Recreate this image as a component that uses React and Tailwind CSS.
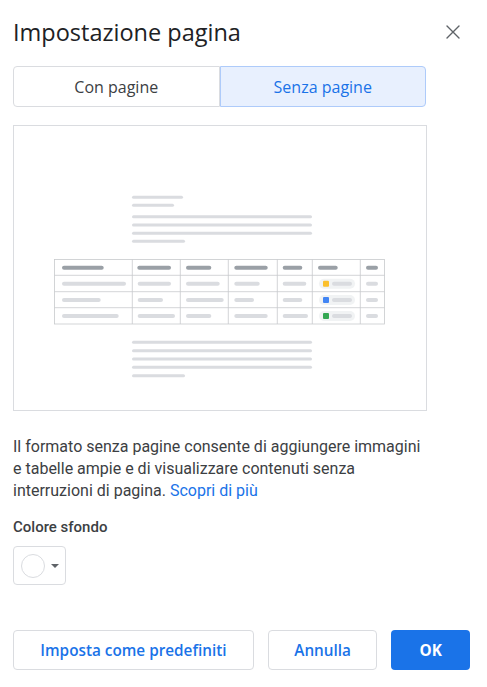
import React, { useState } from 'react';

const pill = (x1, x2, y, color, h = 4) => (
  <rect key={`${x1}-${y}`} x={x1} y={y - h / 2} width={x2 - x1} height={h} rx={h / 2} fill={color} />
);

const Illustration = () => {
  const light = '#dadce0';
  const dark = '#9aa0a6';
  const cols = [132.3, 180.3, 228.3, 277.3, 312.3, 360.3];
  const rows = [275.3, 291.7, 307.7];
  const bodyRows = [
    { y: 283.7, cells: [[62, 126], [137.7, 171], [186, 219.7], [234.3, 259.7], [282.7, 306.3]], chip: '#fbc02d' },
    { y: 300, cells: [[62, 100.7], [137.7, 163], [186, 223.7], [234.3, 254], [282.7, 302.3]], chip: '#4285f4' },
    { y: 316, cells: [[62, 118.7], [137.7, 175], [186, 211.3], [234.3, 267.7], [282.7, 308]], chip: '#34a853' },
  ];
  return (
    <svg viewBox="14 126 412 284" width="412" height="284" className="block">
      {/* top paragraph */}
      {pill(132, 183, 197.3, light, 3)}
      {pill(132, 174, 205.3, light, 3)}
      {pill(132, 312, 216.7, light, 3)}
      {pill(132, 312, 225, light, 3)}
      {pill(132, 312, 233.3, light, 3)}
      {pill(132, 185, 241.3, light, 3)}

      {/* table */}
      <rect x="54.5" y="259.5" width="330" height="64.5" fill="white" stroke="#c8cacd" strokeWidth="0.8" />
      {rows.map((y) => (
        <line key={y} x1="54.5" x2="384.5" y1={y} y2={y} stroke="#c8cacd" strokeWidth="0.8" />
      ))}
      {cols.map((x) => (
        <line key={x} x1={x} x2={x} y1="259.5" y2="324" stroke="#c8cacd" strokeWidth="0.8" />
      ))}
      {pill(62, 103.7, 267.7, dark)}
      {pill(137.3, 171, 267.7, dark)}
      {pill(186, 211.3, 267.7, dark)}
      {pill(234.3, 267.7, 267.7, dark)}
      {pill(282.7, 302.3, 267.7, dark)}
      {pill(318, 337.7, 267.7, dark)}
      {pill(366, 378, 267.7, dark)}
      {bodyRows.map((r) => (
        <g key={r.y}>
          {r.cells.map(([a, b]) => pill(a, b, r.y, light))}
          <rect x="319" y={r.y - 5} width="36" height="10" rx="5" fill="#f1f3f4" />
          <rect x="323" y={r.y - 3} width="6" height="6" rx="1" fill={r.chip} />
          {pill(332, 352, r.y, light)}
          {pill(366, 378, r.y, light)}
        </g>
      ))}

      {/* bottom paragraph */}
      {pill(132, 312, 342.3, light, 3)}
      {pill(132, 312, 350.7, light, 3)}
      {pill(132, 312, 359, light, 3)}
      {pill(132, 312, 367.3, light, 3)}
      {pill(132, 185, 375.7, light, 3)}
    </svg>
  );
};

export default function App() {
  const [mode, setMode] = useState('pageless');

  return (
    <div className="w-[487px] h-[687px] bg-white pl-[13px] pr-[17px] pt-[16px] font-['Roboto',sans-serif] text-[#3c4043]">
      {/* Header */}
      <div className="flex items-center justify-between">
        <h1 className="font-['Open_Sans',sans-serif] text-[23.5px] leading-[32px] text-[#202124]">
          Impostazione pagina
        </h1>
        <button className="mr-[10px] text-[#5f6368]">
          <svg width="14" height="14" viewBox="0 0 14 14" className="block">
            <path d="M1 1L13 13M13 1L1 13" stroke="currentColor" strokeWidth="1.4" strokeLinecap="round" />
          </svg>
        </button>
      </div>

      {/* Toggle */}
      <div className="mt-[18px] flex w-[413px] h-[41px] font-['Open_Sans',sans-serif] text-[16px] font-medium">
        <button
          onClick={() => setMode('paged')}
          className={`flex-1 rounded-l-[4px] border ${mode === 'paged' ? 'border-[#aecbfa] bg-[#e8f0fe] text-[#1a73e8]' : 'border-[#dadce0] text-[#3c4043]'}`}
        >
          Con pagine
        </button>
        <button
          onClick={() => setMode('pageless')}
          className={`flex-1 rounded-r-[4px] border ${mode === 'pageless' ? 'border-[#aecbfa] bg-[#e8f0fe] text-[#1a73e8]' : 'border-[#dadce0] text-[#3c4043]'}`}
        >
          Senza pagine
        </button>
      </div>

      {/* Preview */}
      <div className="mt-[18px] w-[414px] h-[286px] border border-[#dadce0]">
        <Illustration />
      </div>

      {/* Description */}
      <p className="mt-[25px] w-[440px] text-[16px] leading-[22px] text-[#3c4043]">
        Il formato senza pagine consente di aggiungere immagini
        <br />
        e tabelle ampie e di visualizzare contenuti senza
        <br />
        interruzioni di pagina. <a className="text-[#1a73e8]" href="#">Scopri di più</a>
      </p>

      {/* Background colour */}
      <div className="mt-[15px] text-[15px] leading-[20px] font-medium text-[#3c4043]">Colore sfondo</div>
      <button className="mt-[9px] flex items-center w-[53px] h-[39px] border border-[#dadce0] rounded-[4px] pl-[7px]">
        <span className="w-[24px] h-[24px] rounded-full border border-[#dadce0] bg-white" />
        <svg width="8" height="4" viewBox="0 0 8 4" className="ml-[6px]">
          <path d="M0 0L8 0L4 4Z" fill="#5f6368" />
        </svg>
      </button>

      {/* Footer */}
      <div className="mt-[45px] flex items-center gap-[14px] font-['Open_Sans',sans-serif] text-[15.3px] font-semibold">
        <button className="w-[242px] h-[40px] border border-[#dadce0] rounded-[4px] text-[#1a73e8]">
          Imposta come predefiniti
        </button>
        <button className="w-[110px] h-[40px] border border-[#dadce0] rounded-[4px] text-[#1a73e8]">
          Annulla
        </button>
        <button className="w-[79px] h-[40px] rounded-[4px] bg-[#1a73e8] text-white font-bold">OK</button>
      </div>
    </div>
  );
}
